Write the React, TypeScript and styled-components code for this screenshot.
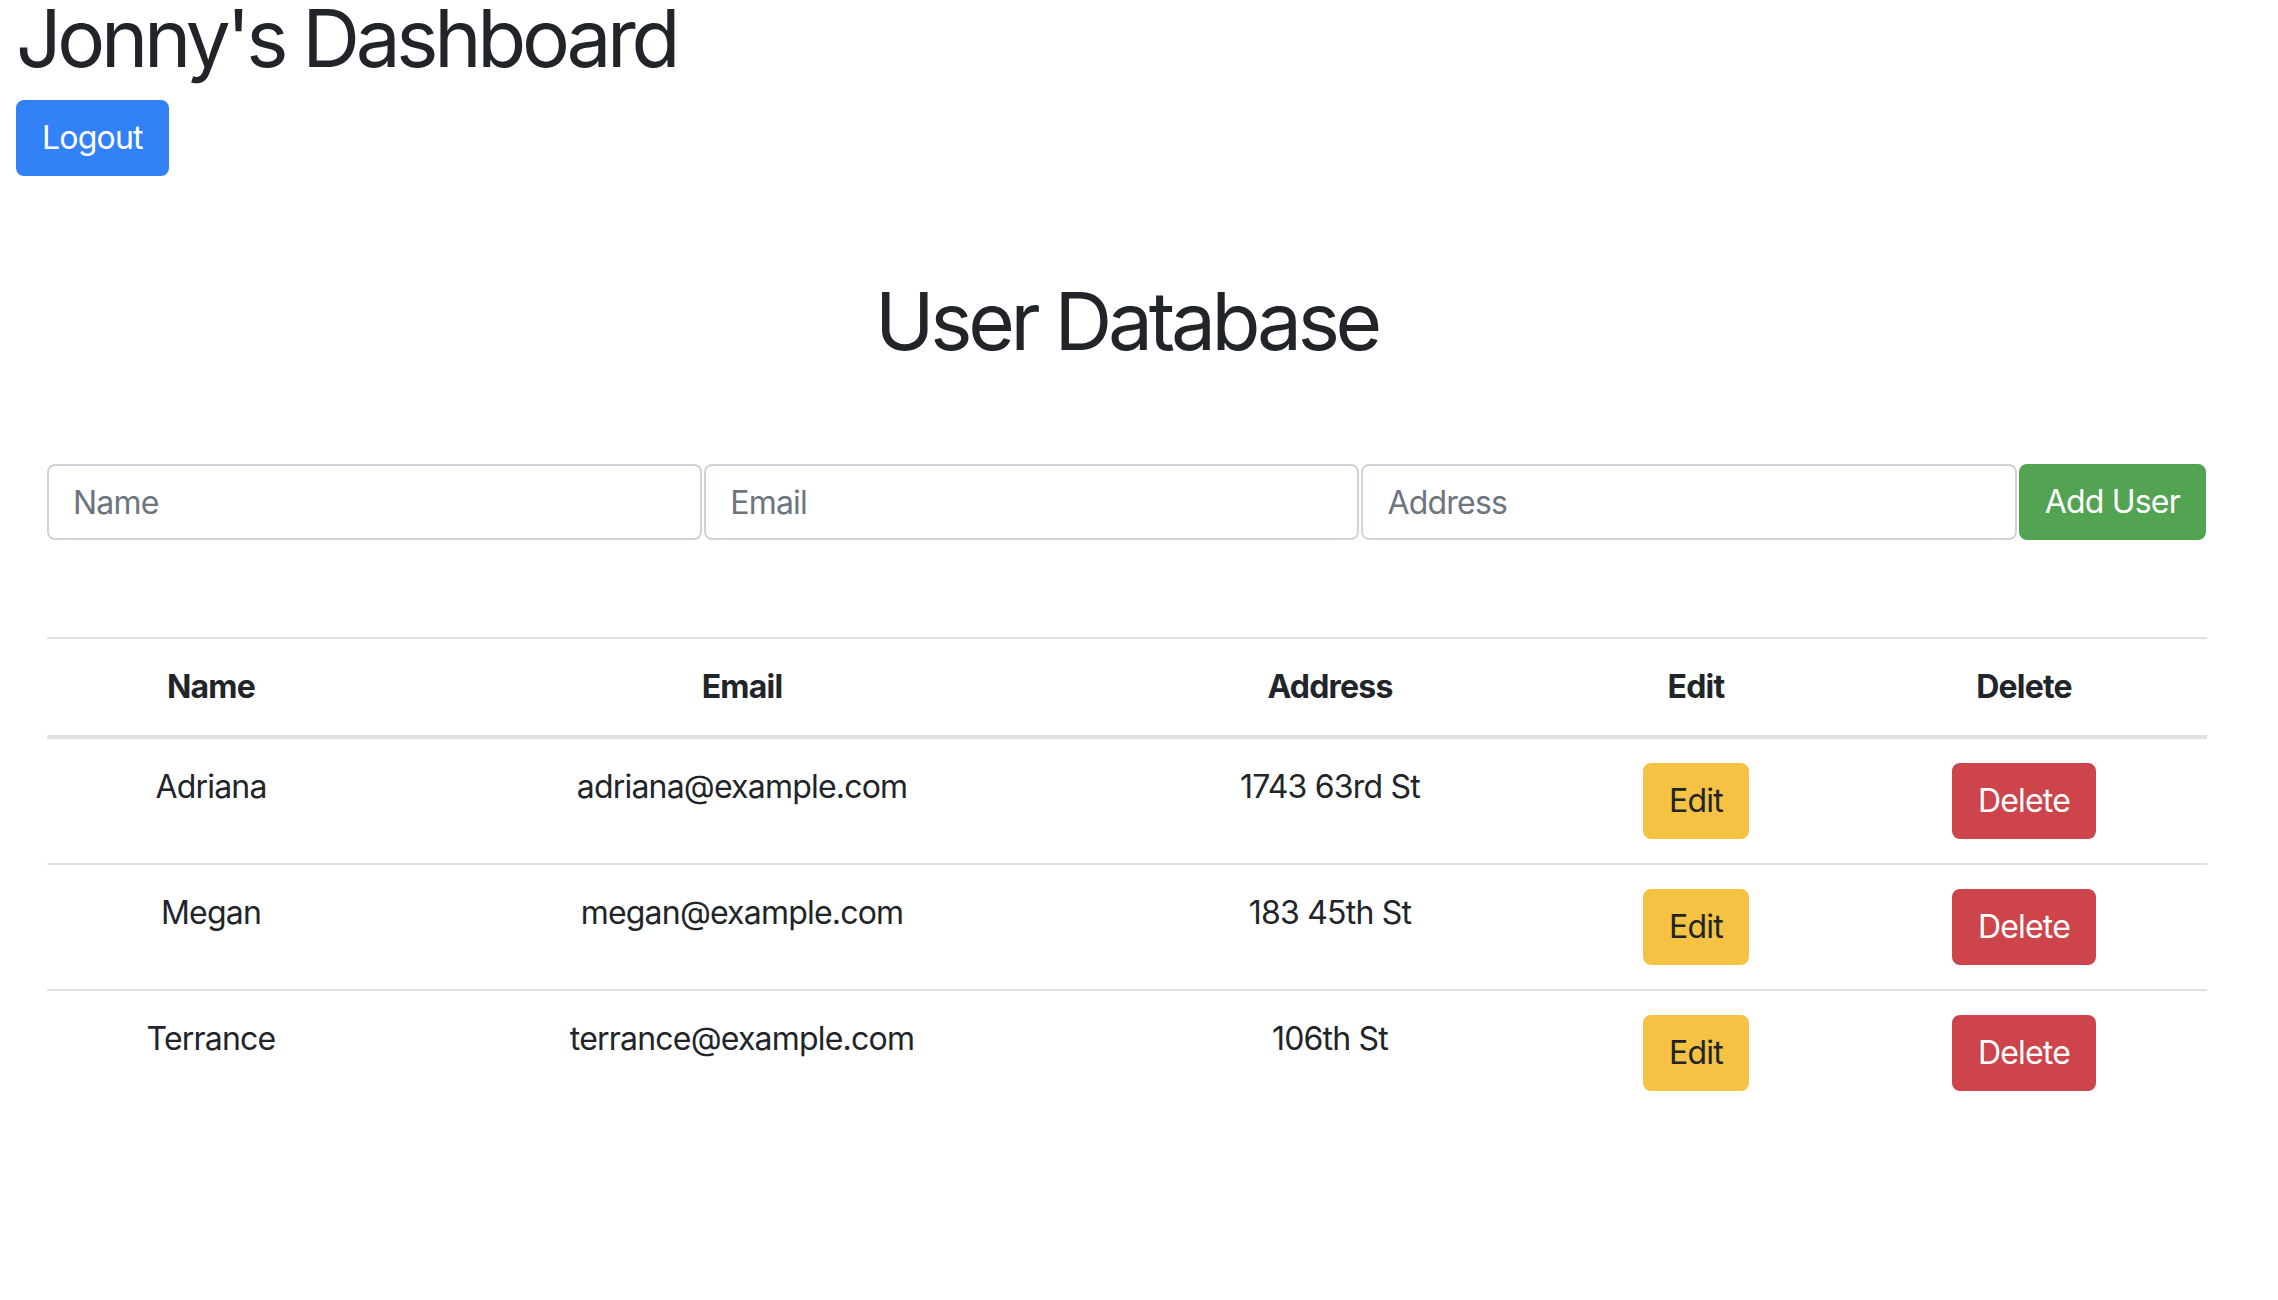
import React from "react";
import styled, { createGlobalStyle } from "styled-components";

const GlobalStyle = createGlobalStyle`
  html, body {
    margin: 0;
    padding: 0;
    background: #ffffff;
  }
  body {
    font-family: Inter, "Liberation Sans", sans-serif;
    font-size: 32px;
    letter-spacing: -0.8px;
    color: #212529;
  }
  * {
    box-sizing: border-box;
  }
`;

const colors = {
  text: "#212529",
  muted: "#6c757d",
  border: "#dee2e6",
  inputBorder: "#ced4da",
  primary: "#3381f6",
  success: "#52a452",
  warning: "#f5c243",
  danger: "#cd444b",
};

const Page = styled.div`
  padding: 0 0 120px 16px;
`;

const TopBar = styled.header`
  display: flex;
  flex-direction: column;
  align-items: flex-start;
  gap: 24px;
`;

const PageTitle = styled.h1`
  margin: 0;
  font-size: 80px;
  font-weight: 400;
  line-height: 76px;
  letter-spacing: -4.3px;
`;

type Variant = "primary" | "success" | "warning" | "danger";

const Button = styled.button<{ $variant: Variant }>`
  height: 76px;
  padding: 0 24px;
  border: 2px solid ${(p) => colors[p.$variant]};
  border-radius: 8px;
  background: ${(p) => colors[p.$variant]};
  color: ${(p) => (p.$variant === "warning" ? colors.text : "#ffffff")};
  font-family: inherit;
  font-size: 32px;
  letter-spacing: -0.8px;
  line-height: 48px;
  white-space: nowrap;
  cursor: pointer;
`;

const Section = styled.main`
  padding: 97px 72px 0 31px;
`;

const SectionTitle = styled.h1`
  margin: 0 0 95px;
  text-align: center;
  font-size: 80px;
  font-weight: 400;
  line-height: 96px;
  letter-spacing: -4.3px;
`;

const Form = styled.form`
  display: flex;
  gap: 2px;
  margin-bottom: 97px;
`;

const Input = styled.input`
  flex: 1;
  min-width: 0;
  height: 76px;
  padding: 0 24px;
  border: 2px solid ${colors.inputBorder};
  border-radius: 8px;
  font-family: inherit;
  font-size: 32px;
  letter-spacing: -0.8px;
  color: ${colors.text};
  &::placeholder {
    color: ${colors.muted};
  }
`;

const Table = styled.table`
  width: 100%;
  table-layout: fixed;
  border-collapse: collapse;
`;

const HeadCell = styled.th`
  padding: 24px;
  border-top: 2px solid ${colors.border};
  border-bottom: 4px solid ${colors.border};
  font-weight: 700;
  line-height: 48px;
  text-align: center;
  vertical-align: bottom;
`;

const Cell = styled.td`
  padding: 24px;
  border-top: 2px solid ${colors.border};
  line-height: 48px;
  text-align: center;
  vertical-align: top;
`;

type User = { name: string; email: string; address: string };

const users: User[] = [
  { name: "Adriana", email: "adriana@example.com", address: "1743 63rd St" },
  { name: "Megan", email: "megan@example.com", address: "183 45th St" },
  { name: "Terrance", email: "terrance@example.com", address: "106th St" },
];

const columns = [
  { label: "Name", width: 328 },
  { label: "Email", width: 734 },
  { label: "Address", width: 442 },
  { label: "Edit", width: 290 },
  { label: "Delete", width: 366 },
];

export default function App() {
  return (
    <>
      <GlobalStyle />
      <Page>
        <TopBar>
          <PageTitle>Jonny's Dashboard</PageTitle>
          <Button $variant="primary">Logout</Button>
        </TopBar>
        <Section>
          <SectionTitle>User Database</SectionTitle>
          <Form onSubmit={(e) => e.preventDefault()}>
            <Input placeholder="Name" />
            <Input placeholder="Email" />
            <Input placeholder="Address" />
            <Button $variant="success" type="submit">
              Add User
            </Button>
          </Form>
          <Table>
            <colgroup>
              {columns.map((c) => (
                <col key={c.label} style={{ width: c.width }} />
              ))}
            </colgroup>
            <thead>
              <tr>
                {columns.map((c) => (
                  <HeadCell key={c.label}>{c.label}</HeadCell>
                ))}
              </tr>
            </thead>
            <tbody>
              {users.map((u) => (
                <tr key={u.email}>
                  <Cell>{u.name}</Cell>
                  <Cell>{u.email}</Cell>
                  <Cell>{u.address}</Cell>
                  <Cell>
                    <Button $variant="warning">Edit</Button>
                  </Cell>
                  <Cell>
                    <Button $variant="danger">Delete</Button>
                  </Cell>
                </tr>
              ))}
            </tbody>
          </Table>
        </Section>
      </Page>
    </>
  );
}
